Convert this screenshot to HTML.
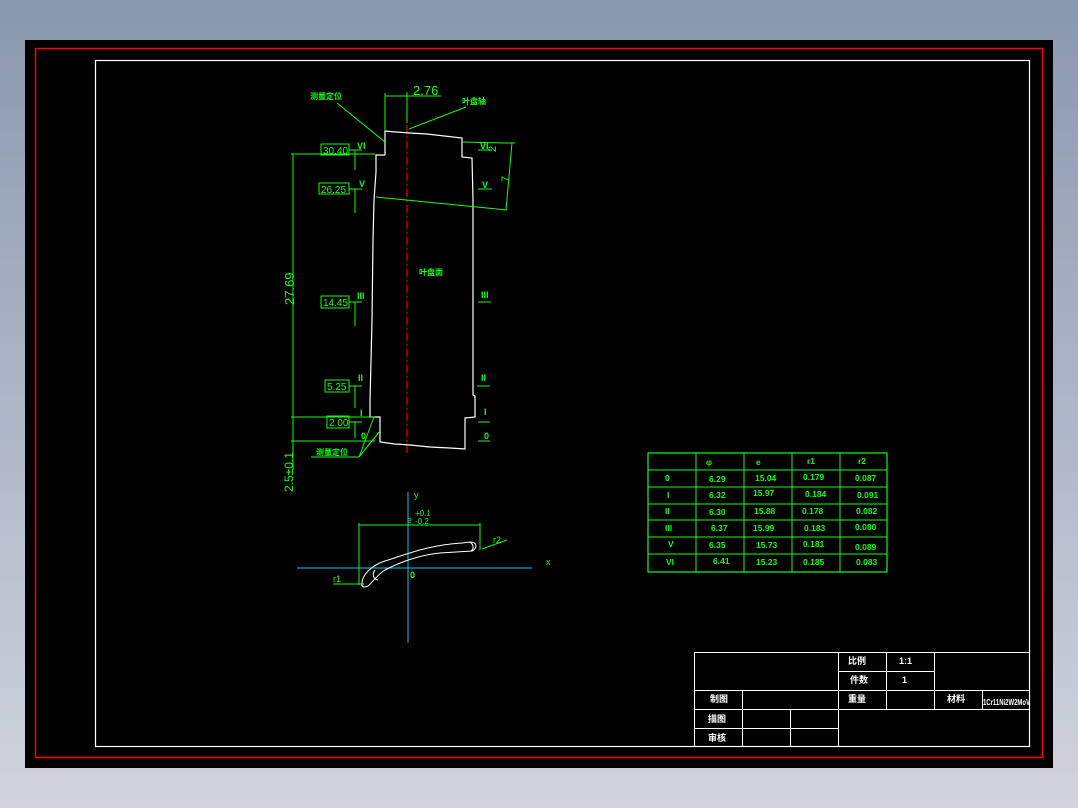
<!DOCTYPE html>
<html><head><style>
html,body{margin:0;padding:0;width:1078px;height:808px;overflow:hidden;background:linear-gradient(#8a98ad,#b4bccb 60%,#d0d4de);}
svg{position:absolute;left:0;top:0}
text{font-family:"Liberation Sans","Noto Sans CJK SC",sans-serif;}
</style></head><body>
<svg width="1078" height="808" viewBox="0 0 1078 808">
<rect x="25" y="40" width="1028" height="728" fill="#000"/>
<rect x="35.5" y="48.5" width="1007" height="709" fill="none" stroke="#f00" stroke-width="1.5"/>
<rect x="95.5" y="60.5" width="934" height="686" fill="none" stroke="#fff" stroke-width="1.2"/>

<line x1="407" y1="125" x2="407" y2="455" stroke="#e00" stroke-width="1.2" stroke-dasharray="8,3,2,3"/>

<polyline points="385,155 385,131 396,132 410,133 427,134 462,138 462,157 472,158 473,200 473,395 475,396 475,417 465,418 465,449 450,448 430,447 410,445 395,444 380,442 380,417 370,417 370,401 371,361 372,320 373,240 374,200 376,172 376,155 385,155" fill="none" stroke="#fff" stroke-width="1.2"/>

<g stroke="#1f1" stroke-width="1" fill="none">
<line x1="291" y1="154" x2="375" y2="154"/>
<line x1="293" y1="154" x2="293" y2="470"/>
<line x1="291" y1="417" x2="375" y2="417"/>
<line x1="291" y1="441" x2="375" y2="441"/>
<line x1="376" y1="197" x2="507" y2="210"/>
<line x1="462" y1="142" x2="505" y2="143"/>
<line x1="505" y1="143" x2="515" y2="143"/>
<line x1="512" y1="143" x2="506" y2="210"/>
<line x1="385" y1="93" x2="385" y2="131"/>
<line x1="385" y1="96" x2="441" y2="96"/>
<line x1="407" y1="92" x2="407" y2="123"/>
<line x1="337" y1="103" x2="385" y2="142"/>
<line x1="409" y1="129" x2="466" y2="107"/>
<rect x="321" y="144" width="28" height="11"/>
<rect x="319" y="183" width="30" height="11"/>
<rect x="321" y="296" width="28" height="12"/>
<rect x="325" y="380" width="24" height="12"/>
<rect x="327" y="416" width="22" height="12"/>
<line x1="349" y1="150" x2="362" y2="150"/><line x1="355" y1="150" x2="355" y2="170"/>
<line x1="349" y1="189" x2="362" y2="189"/><line x1="355" y1="189" x2="355" y2="213"/>
<line x1="349" y1="302" x2="362" y2="302"/><line x1="355" y1="302" x2="355" y2="326"/>
<line x1="349" y1="386" x2="362" y2="386"/><line x1="355" y1="386" x2="355" y2="408"/>
<line x1="349" y1="422" x2="362" y2="422"/><line x1="355" y1="422" x2="355" y2="438"/>
<line x1="478" y1="150" x2="492" y2="150"/>
<line x1="478" y1="189" x2="492" y2="189"/>
<line x1="478" y1="302" x2="491" y2="302"/>
<line x1="477" y1="386" x2="490" y2="386"/>
<line x1="478" y1="422" x2="490" y2="422"/>
<line x1="478" y1="441" x2="490" y2="441"/>
<line x1="311" y1="457" x2="359" y2="457"/>
<line x1="359" y1="457" x2="374" y2="417"/>
<line x1="359" y1="457" x2="380" y2="431"/>
<rect x="648" y="453" width="239" height="119" stroke-width="1.2"/>
<path d="M696 453V572M744 453V572M792 453V572M840 453V572M648 470H887M648 487H887M648 504H887M648 520H887M648 537H887M648 554H887"/>
<line x1="359" y1="525" x2="480" y2="525"/>
<line x1="359" y1="523" x2="359" y2="585"/>
<line x1="480" y1="523" x2="480" y2="550"/>
<line x1="333" y1="584" x2="364" y2="584"/>
<line x1="482" y1="549" x2="507" y2="540"/>
</g>
<g fill="#1f1" font-size="10">
<text x="413" y="95" font-size="13">2.76</text>
<text x="323" y="154" font-size="10">30.40</text>
<text x="321" y="193" font-size="10">26.25</text>
<text x="323" y="306" font-size="10">14.45</text>
<text x="327" y="390" font-size="10">5.25</text>
<text x="329" y="426" font-size="10">2.00</text>
<g font-weight="bold">
<text x="357" y="149" font-size="9">VI</text>
<text x="359" y="187" font-size="9">V</text>
<text x="357" y="299" font-size="9">III</text>
<text x="358" y="381" font-size="9">II</text>
<text x="360" y="416" font-size="9">I</text>
<text x="361" y="439" font-size="9">0</text>
<text x="480" y="149" font-size="9">VI</text>
<text x="482" y="188" font-size="9">V</text>
<text x="481" y="298" font-size="9">III</text>
<text x="481" y="381" font-size="9">II</text>
<text x="484" y="415" font-size="9">I</text>
<text x="484" y="439" font-size="9">0</text>
<text x="310" y="99" font-size="8">测量定位</text>
<text x="462" y="104" font-size="8">叶盘轴</text>
<text x="419" y="275" font-size="8">叶盘面</text>
<text x="316" y="455" font-size="8">测量定位</text>
</g>
<text transform="translate(294,305) rotate(-90)" font-size="13">27.69</text>
<text transform="translate(293,492) rotate(-90)" font-size="12">2.5±0.1</text>
<text transform="translate(496,152) rotate(-90)" font-size="11">2</text>
<text transform="translate(509,182) rotate(-90)" font-size="11">7</text>
<text x="414" y="498" font-size="9">y</text>
<text x="546" y="565" font-size="9">x</text>
<text x="410" y="578" font-size="9" font-weight="bold">0</text>
<text x="333" y="582" font-size="9">r1</text>
<text x="493" y="543" font-size="9">r2</text>
<text x="407" y="523" font-size="9">e</text>
<text x="415" y="516" font-size="8">+0.1</text>
<text x="415" y="524" font-size="8">-0.2</text>
<g font-size="8.5" font-weight="bold">
<text x="706" y="465">φ</text><text x="756" y="465">e</text><text x="807" y="464">r1</text><text x="858" y="464">r2</text>
<text x="665" y="481">0</text><text x="709" y="482">6.29</text><text x="755" y="481">15.04</text><text x="803" y="480">0.179</text><text x="855" y="481">0.087</text>
<text x="667" y="498">I</text><text x="709" y="498">6.32</text><text x="753" y="496">15.97</text><text x="805" y="497">0.184</text><text x="857" y="498">0.091</text>
<text x="665" y="514">II</text><text x="709" y="515">6.30</text><text x="754" y="514">15.88</text><text x="802" y="514">0.178</text><text x="856" y="514">0.082</text>
<text x="665" y="531">III</text><text x="711" y="531">6.37</text><text x="753" y="531">15.99</text><text x="804" y="531">0.183</text><text x="855" y="530">0.080</text>
<text x="668" y="547">V</text><text x="709" y="548">6.35</text><text x="756" y="548">15.73</text><text x="803" y="547">0.181</text><text x="855" y="550">0.089</text>
<text x="666" y="565">VI</text><text x="713" y="564">6.41</text><text x="756" y="565">15.23</text><text x="803" y="565">0.185</text><text x="856" y="565">0.083</text>
</g>
</g>

<line x1="408" y1="492" x2="408" y2="643" stroke="#0cf" stroke-width="1"/>
<line x1="297" y1="568" x2="532" y2="568" stroke="#0cf" stroke-width="1"/>
<g stroke="#fff" stroke-width="1" fill="none">
<path d="M362,583 C362,575 372,565 385,561 C410,553 430,545 462,543 L470,542 C477,542 478,548 472,551 L440,553 C420,555 400,562 385,570 C378,574 372,583 368,586 C364,588 361,587 362,583 Z"/>
<path d="M375,570 C372,574 373,579 378,580"/>
<path d="M470,542 C474,545 474,549 471,551"/>
</g>

<g stroke="#fff" stroke-width="1" fill="none">
<rect x="694.5" y="652.5" width="335" height="94"/>
<path d="M838.5 652V747M886.5 652V709M934.5 652V709M838 671.5H934M694 690.5H1030M694 709.5H1030M694 728.5H838M742.5 690V747M790.5 709V747M982.5 690V709"/>
</g>
<g fill="#fff" font-size="9" font-weight="bold">
<text x="848" y="664">比例</text><text x="899" y="664">1:1</text>
<text x="850" y="683">件数</text><text x="902" y="683">1</text>
<text x="710" y="702">制图</text><text x="848" y="702">重量</text><text x="947" y="702">材料</text>
<text x="983" y="705" font-size="8" textLength="47" lengthAdjust="spacingAndGlyphs">1Cr11Ni2W2MoV</text>
<text x="708" y="722">描图</text><text x="708" y="741">审核</text>
</g>
</svg>
</body></html>
